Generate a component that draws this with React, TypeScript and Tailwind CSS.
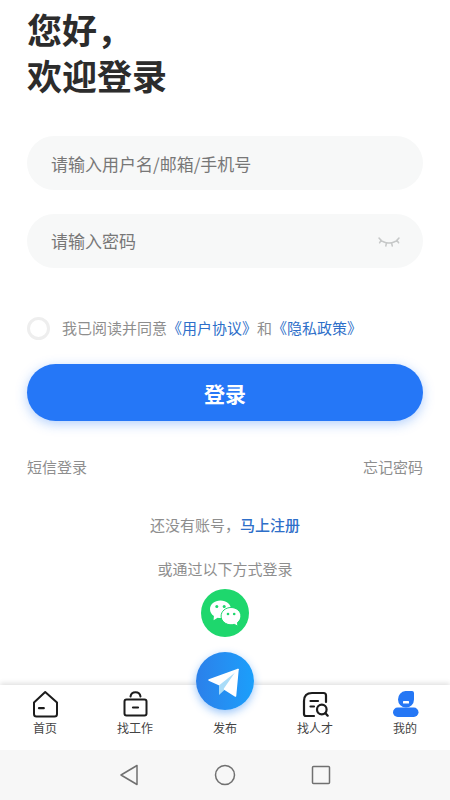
import { useState } from "react";
import type { ReactNode } from "react";

function ClosedEyeIcon() {
  return (
    <svg
      className="h-3.5 w-6"
      viewBox="0 0 24 14"
      fill="none"
      stroke="#c6c8c8"
      strokeWidth="1.5"
      strokeLinecap="round"
    >
      <path d="M2 4C7 10.800 17 10.800 22 4M4.200 6.200 2.600 8.800M9.500 8.800 8.800 12M14.500 8.800l.8 3.200M19.800 6.200l1.800 2.600" />
    </svg>
  );
}

function WechatLogo() {
  return (
    <svg className="size-12" viewBox="0 0 48 48">
      <circle cx="24" cy="24" r="24" fill="#1ed76d" />
      <path
        fill="#fff"
        d="M19.5 11.5C13.6 11.5 9 15.3 9 20.2c0 2.8 1.5 5.2 3.9 6.8l-.3 4.200 4-2.500c1 .3 1.900.4 2.900.4C25.400 29.100 30 25.100 30 20.200s-4.600-8.700-10.500-8.700z"
      />
      <path
        fill="#fff"
        stroke="#1ed76d"
        strokeWidth="1"
        d="M30 18.500c-5.400 0-9.900 3.700-9.900 8.600s4.500 8.700 9.900 8.700c1.100 0 2.200-.2 3.200-.5l3.700 1.900-.4-3.700c2.100-1.500 3.400-3.900 3.400-6.400 0-4.900-4.500-8.600-9.900-8.600z"
      />
      <g fill="#1ed76d">
        <circle cx="15.800" cy="17.500" r="1.500" />
        <circle cx="23.200" cy="17.500" r="1.500" />
        <circle cx="27" cy="25" r="1.300" />
        <circle cx="33.200" cy="25" r="1.300" />
      </g>
    </svg>
  );
}

function PlaneIcon() {
  return (
    <svg className="size-[34px]" viewBox="0 0 34 34" strokeLinejoin="round">
      <path d="M30 6 11 20.500v10.500l6-5.500z" fill="#a9dcf8" />
      <path
        d="M1 16 30 5.500 11 20.500z"
        fill="#fff"
        stroke="#fff"
        strokeWidth="1.500"
      />
      <path
        d="M30 5.500 16.500 25 27.500 32z"
        fill="#fff"
        stroke="#fff"
        strokeWidth="1.500"
      />
    </svg>
  );
}

function HomeIcon() {
  return (
    <svg
      className="size-7"
      viewBox="0 0 28 28"
      fill="none"
      stroke="#1c1c1c"
      strokeWidth="2"
      strokeLinecap="round"
      strokeLinejoin="round"
    >
      <path d="M3 12.500 14.200 2 26 12.500V24q0 2.500-2.500 2.500h-18Q3 26.500 3 24z" />
      <path d="M8 18.200h4.800" strokeWidth="2.200" />
    </svg>
  );
}

function BriefcaseIcon() {
  return (
    <svg
      className="size-7"
      viewBox="0 0 28 28"
      fill="none"
      stroke="#1c1c1c"
      strokeWidth="2"
      strokeLinecap="round"
      strokeLinejoin="round"
    >
      <rect x="3.500" y="9.500" width="22" height="16" rx="2" />
      <path d="M9.500 6.500C10.500 .8 18.500.8 19.500 6.500" />
      <path d="M12 17.500h5" strokeWidth="2.200" />
    </svg>
  );
}

function TalentIcon() {
  return (
    <svg
      className="size-7"
      viewBox="0 0 28 28"
      fill="none"
      stroke="#1c1c1c"
      strokeWidth="2.2"
      strokeLinecap="round"
      strokeLinejoin="round"
    >
      <path d="M13 26H5Q3 26 3 24V11Q3 3 11 3h11.500Q25 3 25 5.500V12" />
      <path d="M9.500 11h7.500M9.500 16.500h3.500" />
      <circle cx="20.800" cy="19.500" r="4.800" />
      <path d="m24.500 23.200 2.200 2.500" />
    </svg>
  );
}

function ProfileIcon() {
  return (
    <svg className="size-7" viewBox="0 0 28 28">
      <path
        fill="#2577f5"
        d="M14.500 1H21q2 0 2 2v6.500a8 8 0 0 1-16 0A8.400 8.400 0 0 1 14.500 1z"
      />
      <rect x="2" y="17.500" width="25.500" height="9.500" rx="4.700" fill="#2577f5" />
      <rect x="12" y="11" width="6" height="2.500" rx=".5" fill="#fff" />
    </svg>
  );
}

function PublishBadge() {
  return (
    <span className="mb-2 flex size-[58px] shrink-0 items-center justify-center rounded-full bg-linear-to-r from-[#2b80ea] to-[#1a9ffb] shadow-[0_3px_8px_rgba(37,130,245,0.45)]">
      <PlaneIcon />
    </span>
  );
}

const tabs: { label: string; icon: ReactNode }[] = [
  { label: "首页", icon: <HomeIcon /> },
  { label: "找工作", icon: <BriefcaseIcon /> },
  { label: "发布", icon: <PublishBadge /> },
  { label: "找人才", icon: <TalentIcon /> },
  { label: "我的", icon: <ProfileIcon /> },
];

function TabBar() {
  return (
    <nav className="flex h-[65px] bg-white pb-3.5 shadow-[0_-2px_5px_rgba(0,0,0,0.12)]">
      {tabs.map((tab) => (
        <a
          key={tab.label}
          href="#"
          className="flex flex-1 flex-col items-center justify-end gap-0.5 text-xs leading-4 text-[#444]"
        >
          {tab.icon}
          <span>{tab.label}</span>
        </a>
      ))}
    </nav>
  );
}

function SystemBar() {
  const icon = "size-6 fill-none stroke-[#707070] stroke-[1.5]";
  return (
    <div className="flex h-[50px] items-center justify-center gap-[72px] bg-[#f7f7f7]">
      <button type="button" aria-label="返回">
        <svg className={icon} viewBox="0 0 24 24" strokeLinejoin="round">
          <path d="M20 2.500v19L4 12z" />
        </svg>
      </button>
      <button type="button" aria-label="主页">
        <svg className={icon} viewBox="0 0 24 24">
          <circle cx="12" cy="12" r="9.500" />
        </svg>
      </button>
      <button type="button" aria-label="最近任务">
        <svg className={icon} viewBox="0 0 24 24">
          <rect x="3.500" y="3.500" width="17" height="17" rx="1" />
        </svg>
      </button>
    </div>
  );
}

export default function App() {
  const [account, setAccount] = useState("");
  const [password, setPassword] = useState("");
  const [visible, setVisible] = useState(false);
  const [agreed, setAgreed] = useState(false);

  return (
    <div className="flex min-h-screen flex-col bg-white font-['Noto_Sans_CJK_SC',sans-serif] text-[15px] leading-6 text-[#8e8e8e]">
      <main className="flex flex-1 flex-col px-[27px] pt-1.5">
        <h1 className="text-[35px] leading-[46px] font-bold text-[#2c2c2c]">
          您好，
          <br />
          欢迎登录
        </h1>

        <form className="mt-[38px]" onSubmit={(e) => e.preventDefault()}>
          <input
            type="text"
            aria-label="用户名"
            placeholder="请输入用户名/邮箱/手机号"
            value={account}
            onChange={(e) => setAccount(e.target.value)}
            className="h-[54px] w-full rounded-full bg-[#f7f8f8] px-6 text-[17px] text-[#333] outline-none placeholder:text-[#777]"
          />
          <div className="mt-6 flex h-[54px] items-center rounded-full bg-[#f7f8f8] pr-[22px] pl-6">
            <input
              type={visible ? "text" : "password"}
              aria-label="密码"
              placeholder="请输入密码"
              value={password}
              onChange={(e) => setPassword(e.target.value)}
              className="min-w-0 flex-1 text-[17px] text-[#333] outline-none placeholder:text-[#777]"
            />
            <button
              type="button"
              aria-label="显示密码"
              onClick={() => setVisible(!visible)}
            >
              <ClosedEyeIcon />
            </button>
          </div>

          <div className="mt-12 flex items-center gap-3">
            <input
              id="agree"
              type="checkbox"
              checked={agreed}
              onChange={(e) => setAgreed(e.target.checked)}
              className="size-[23px] shrink-0 appearance-none rounded-full border-3 border-[#eee] checked:bg-[#2577f5]"
            />
            <label htmlFor="agree">
              我已阅读并同意
              <a href="#" className="text-[#2e6fc9]">
                《用户协议》
              </a>
              和
              <a href="#" className="text-[#2e6fc9]">
                《隐私政策》
              </a>
            </label>
          </div>

          <button
            type="submit"
            className="mt-6 h-[57px] w-full rounded-full bg-[#2577f7] text-[21px] font-bold text-white shadow-[0_3px_12px_rgba(37,119,247,0.35)]"
          >
            登录
          </button>
        </form>

        <div className="mt-[34px] flex justify-between">
          <a href="#">短信登录</a>
          <a href="#">忘记密码</a>
        </div>

        <p className="mt-[34px] text-center">
          还没有账号，
          <a href="#" className="font-medium text-[#2e6fc9]">
            马上注册
          </a>
        </p>
        <p className="mt-5 text-center">或通过以下方式登录</p>
        <button
          type="button"
          aria-label="微信登录"
          className="mt-2 self-center rounded-full"
        >
          <WechatLogo />
        </button>
      </main>
      <TabBar />
      <SystemBar />
    </div>
  );
}
